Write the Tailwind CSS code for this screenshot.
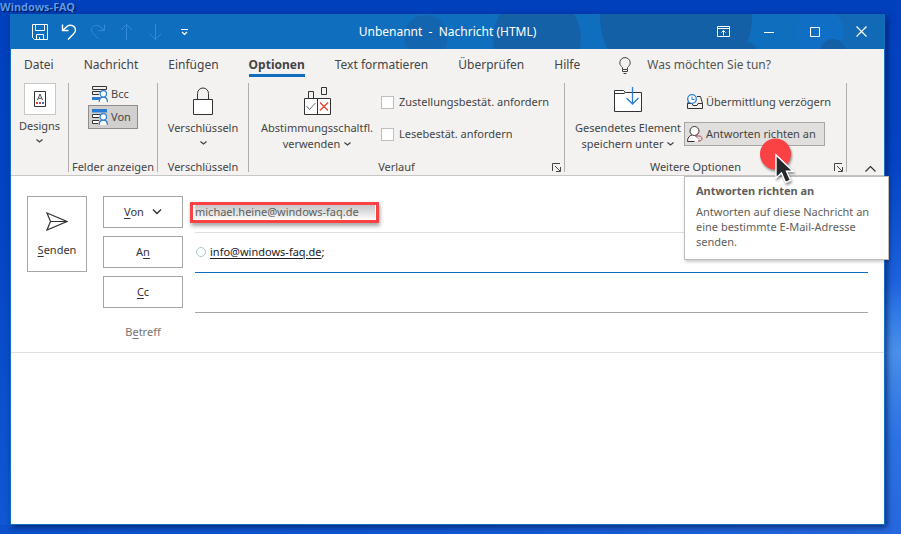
<!DOCTYPE html>
<html lang="de">
<head>
<meta charset="utf-8">
<meta name="viewport" content="width=device-width, initial-scale=1">
<title>Unbenannt - Nachricht (HTML)</title>
<script src="https://cdn.jsdelivr.net/npm/@tailwindcss/browser@4"></script>
</head>
<body class="relative flex min-h-screen flex-col bg-[linear-gradient(180deg,#0140bd_0%,#0443c2_40%,#0c50cc_75%,#1158d4_100%)] pt-[14px] pr-4 pb-[9px] pl-[10px] font-['Noto_Sans','Open_Sans',sans-serif] text-[11px] leading-4 text-[#444]">
  <!-- Desktop glow on the right and along the bottom -->
  <div aria-hidden="true" class="absolute inset-y-0 right-0 w-4 bg-[linear-gradient(180deg,#0140bd_0%,#0443c2_30%,#0c50cc_40%,#1f62dd_53%,#2f78e6_58%,#4a90ea_66%,#3c82e6_72%,#2c72e4_82%,#2668dd_100%)]"></div>
  <div aria-hidden="true" class="absolute inset-x-0 bottom-0 h-[9px] bg-[linear-gradient(90deg,#0c50cc_0%,#1158d4_50%,#2668dd_100%)]"></div>
  <p class="absolute top-0 left-0 leading-[14px] font-bold text-[#5a9bf0] [text-shadow:1px_1px_1px_#001040]">Windows-FAQ</p>

  <div class="relative flex flex-1 flex-col border border-t-0 border-[#1270c4] bg-white shadow-[2px_2px_6px_rgba(0,20,70,0.7)]">
    <header class="relative flex h-[35px] items-center bg-[#106ebe] text-white">
      <svg aria-hidden="true" class="absolute inset-y-0 right-0 h-[35px] w-[504px]" viewBox="0 0 504 35">
        <circle cx="46" cy="23" r="22" fill="#1465b0"/>
        <circle cx="157" cy="24" r="44" fill="#1461a8"/>
        <circle cx="296" cy="2" r="76" fill="#1460a6"/>
        <path d="M434 0h70v35h-70z" fill="#1269b6"/>
        <circle cx="440" cy="18" r="24" fill="#106ec4"/>
        <circle cx="365" cy="42" r="14" fill="#1460a6"/>
        <circle cx="453" cy="38" r="13" fill="#1460a6"/>
      </svg>
      <div class="relative flex-1">
        <nav class="flex items-center gap-[13px] pl-[21px]" aria-label="Schnellzugriff">
          <button aria-label="Speichern"><svg class="size-4" viewBox="0 0 16 16" fill="none" stroke="currentColor"><path d="M.5.5h15v15H2.500l-2-2zM3.500.5v6h9v-6M4.500 15.500v-5h7v5M7.500 13v2.500"/></svg></button>
          <button aria-label="Rückgängig"><svg class="size-4" viewBox="0 0 16 16" fill="none" stroke="currentColor" stroke-width="1.400"><path d="M1.500.5v6h6M1.500 6.500 6 2.500C9 0 14.500 1.500 14.500 6c0 2-1 3-2 4L7 15.500"/></svg></button>
          <button aria-label="Wiederholen" class="text-[#3389e0]"><svg class="size-4" viewBox="0 0 16 16" fill="none" stroke="currentColor"><path d="M14.500.5v6h-6M14.500 6.500 10 2.500C7 0 1.500 1.500 1.500 6c0 2 1 3 2 4L8.500 15"/></svg></button>
          <button aria-label="Vorheriges Element" class="text-[#3389e0]"><svg class="size-4" viewBox="0 0 16 16" fill="none" stroke="currentColor"><path d="M7.500 16V.5M2 6l5.500-5.500L13 6"/></svg></button>
          <button aria-label="Nächstes Element" class="text-[#3389e0]"><svg class="size-4" viewBox="0 0 16 16" fill="none" stroke="currentColor"><path d="M7.500 0v15.500M2 10l5.500 5.500L13 10"/></svg></button>
          <button aria-label="Symbolleiste anpassen"><svg class="size-4" viewBox="0 0 16 16" fill="none" stroke="currentColor" stroke-width="1.200"><path d="M4 5.500h7M5 8l2.500 2.500L10 8"/></svg></button>
        </nav>
      </div>
      <h1 class="relative text-xs whitespace-pre">Unbenannt  -  Nachricht (HTML)</h1>
      <div class="relative flex h-full flex-1 justify-end">
        <button aria-label="Menüband-Anzeigeoptionen" class="grid w-[46px] place-items-center"><svg class="h-[11px] w-[13px]" viewBox="0 0 13 11" fill="none" stroke="currentColor"><path d="M.5.5h12v10H.5zM.5 2.500h12M6.500 9.500v-5M4.500 6.500l2-2 2 2"/></svg></button>
        <button aria-label="Minimieren" class="grid w-[46px] place-items-center"><svg class="size-[10px]" viewBox="0 0 10 10" stroke="currentColor"><path d="M0 5.500h10"/></svg></button>
        <button aria-label="Maximieren" class="grid w-[46px] place-items-center"><svg class="size-[10px]" viewBox="0 0 10 10" fill="none" stroke="currentColor"><path d="M.5.5h9v9h-9z"/></svg></button>
        <button aria-label="Schließen" class="grid w-[46px] place-items-center"><svg class="size-[11px]" viewBox="0 0 11 11" stroke="currentColor" stroke-width="1.200"><path d="m.5.5 10 10m0-10-10 10"/></svg></button>
      </div>
    </header>

    <div class="border-b border-[#c8c6c4] bg-[#f3f2f1]">
      <nav aria-label="Menüband" class="flex h-[34px] items-start gap-[30px] pl-[13px] text-xs whitespace-nowrap">
        <a href="#" class="flex h-7 items-center pt-1">Datei</a>
        <a href="#" class="flex h-7 items-center pt-1">Nachricht</a>
        <a href="#" class="flex h-7 items-center pt-1">Einfügen</a>
        <a href="#" aria-current="page" class="flex h-7 items-center border-b-[3px] border-[#106ebe] pt-[7px] font-bold">Optionen</a>
        <a href="#" class="flex h-7 items-center pt-1">Text formatieren</a>
        <a href="#" class="flex h-7 items-center pt-1">Überprüfen</a>
        <a href="#" class="flex h-7 items-center pt-1">Hilfe</a>
        <button class="ml-[9px] flex h-7 items-center gap-4 pt-1 text-[#555]"><svg class="h-[17px] w-3" viewBox="0 0 12 17" fill="none" stroke="#444"><path d="M3.500 12.500v-2C2 9 .8 8 .8 5.800a5.200 5.200 0 0 1 10.400 0C11.200 8 10 9 8.500 10.500v2zM3.500 12.500v2h5v-2M4.500 16.500h3"/></svg>Was möchten Sie tun?</button>
      </nav>

      <div class="grid grid-cols-[58fr_89fr_91fr_316fr_282fr_37fr] pb-[3px] whitespace-nowrap">
        <section class="flex h-[89px] flex-col items-center border-r border-[#b1afad]">
          <button class="flex flex-col items-center">
            <span class="grid size-8 place-items-center border border-[#c8c6c4] bg-white"><svg class="h-4 w-3" viewBox="0 0 12 16" fill="none"><path d="M.5.5h11v15H.5z" stroke="#333"/><path d="M3.500 9 6 3l2.500 6M4.200 7.200h3.600" stroke="#555"/><path d="M2 11h2v2H2z" fill="#e83c3c"/><path d="M5 11h2v2H5z" fill="#e83c3c"/><path d="M8 11h2v2H8z" fill="#2b7cd3"/></svg></span>
            <span class="mt-[3px]">Designs</span>
            <svg class="mt-[5px] h-1 w-[7px]" viewBox="0 0 7 4" fill="none" stroke="#444" stroke-width="1.300"><path d="M.5.5l3 2.500 3-2.500"/></svg>
          </button>
        </section>

        <section class="flex h-[89px] flex-col items-center justify-between border-r border-[#b1afad]">
          <div class="flex flex-col">
            <button class="flex h-[22px] items-center gap-[3px] border border-transparent px-[3px]">
              <svg class="size-4" viewBox="0 0 16 16" fill="none"><path d="M.5.5h14v3H.5zM9 5.500H.5v3H7" stroke="#333"/><path d="M0 11h8v3H0z" fill="#2b7cd3"/><path d="M7.200 16c0-6.500 8.200-6.500 8.200 0" fill="#fff" stroke="#2b7cd3" stroke-width="1.200"/><circle cx="11.300" cy="7.800" r="3.200" fill="#fff" stroke="#2b7cd3" stroke-width="1.200"/></svg>Bcc</button>
            <button aria-pressed="true" class="flex h-6 items-center gap-[3px] border border-[#8f8d8b] bg-[#d2d0ce] pr-1.5 pl-[3px]">
              <svg class="size-4" viewBox="0 0 16 16" fill="none"><path d="M0 0h15v3.500H0z" fill="#2b7cd3"/><path d="M9 5.500H.5v3H7M7 11.500H.5v3H6" stroke="#333" fill="#fff"/><path d="M7.200 16c0-6.500 8.200-6.500 8.200 0" fill="#fff" stroke="#2b7cd3" stroke-width="1.200"/><circle cx="11.300" cy="7.800" r="3.200" fill="#fff" stroke="#2b7cd3" stroke-width="1.200"/></svg>Von</button>
          </div>
          <h2 class="leading-[10px]">Felder anzeigen</h2>
        </section>

        <section class="flex h-[89px] flex-col items-center justify-between border-r border-[#b1afad] pt-1">
          <button class="flex flex-col items-center">
            <svg class="h-[29px] w-5" viewBox="0 0 20 29" fill="none" stroke="#333"><path d="M4.500 12V6.500a5.500 5.500 0 0 1 11 0V12"/><path d="M.5 12.500h19v15H.5z" fill="#fff"/></svg>
            <span class="mt-1">Verschlüsseln</span>
            <svg class="mt-[5px] h-1 w-[7px]" viewBox="0 0 7 4" fill="none" stroke="#444" stroke-width="1.300"><path d="M.5.5l3 2.500 3-2.500"/></svg>
          </button>
          <h2 class="leading-[10px]">Verschlüsseln</h2>
        </section>

        <section class="flex h-[89px] flex-col justify-between border-r border-[#b1afad] pt-1">
          <div class="flex gap-1.5 pl-[10px]">
            <button class="flex w-[116px] flex-col items-center">
              <svg class="h-[29px] w-[27px]" viewBox="0 0 27 29" fill="none"><path d="M4.500 11V4.500h5V11M17.500.5h5v7h-5z" stroke="#333"/><path d="M.5 11.500h26v16H.5z" fill="#fff" stroke="#333"/><path d="M13.500 11.500v16" stroke="#333"/><path d="m2.500 19 3 3.500L11.500 16" stroke="#5b6b80"/><path d="m16 15.500 8 8m0-8-8 8" stroke="#e83c2c" stroke-width="1.200"/></svg>
              <span class="mt-1">Abstimmungsschaltfl.</span>
              <span class="flex items-center gap-1">verwenden <svg class="h-1 w-[7px]" viewBox="0 0 7 4" fill="none" stroke="#444" stroke-width="1.300"><path d="M.5.5l3 2.500 3-2.500"/></svg></span>
            </button>
            <div class="flex flex-col gap-4 pt-[7px]">
              <label class="flex items-center gap-[5px]"><input type="checkbox" class="size-[13px] appearance-none border border-[#c0bebc] bg-white">Zustellungsbestät. anfordern</label>
              <label class="flex items-center gap-[5px]"><input type="checkbox" class="size-[13px] appearance-none border border-[#c0bebc] bg-white">Lesebestät. anfordern</label>
            </div>
          </div>
          <div class="flex items-center pr-[3px]">
            <h2 class="flex-1 text-center leading-[10px]">Verlauf</h2>
            <button aria-label="Verlauf: weitere Einstellungen" class="pl-2"><svg class="size-[9px]" viewBox="0 0 9 9" fill="none" stroke="#444"><path d="M.5 8V.5H8M3 3l5 5M8.500 4v4.500H4"/></svg></button>
          </div>
        </section>

        <section class="flex h-[89px] flex-col justify-between border-r border-[#b1afad] pt-1">
          <div class="flex gap-[3px] pl-[10px]">
            <button class="flex w-[106px] flex-col items-center">
              <svg class="h-[29px] w-7" viewBox="0 0 28 29" fill="none"><path d="M.5 24.500V3.500h9l2 2h16v19z" fill="#fff" stroke="#333"/><path d="M.5 6.500H10l1.500-1" stroke="#333"/><path d="M18.500 0v17M12.500 11l6 6 6-6" stroke="#2b7cd3" stroke-width="1.300"/></svg>
              <span class="mt-1">Gesendetes Element</span>
              <span class="flex items-center gap-1">speichern unter <svg class="h-1 w-[7px]" viewBox="0 0 7 4" fill="none" stroke="#444" stroke-width="1.300"><path d="M.5.5l3 2.500 3-2.500"/></svg></span>
            </button>
            <div class="flex flex-col gap-2 pt-[3px]">
              <button class="flex h-6 items-center gap-[3px] border border-transparent px-0.5">
                <svg class="size-4" viewBox="0 0 16 16" fill="none"><path d="M10 2.500h3.500l2 7v5H.5v-5H5l1 2h4l1-2h4.500M1.500 7.500l-1 2" stroke="#333"/><circle cx="5" cy="5" r="4.300" fill="#fff" stroke="#2b7cd3" stroke-width="1.300"/><path d="M5 2.500V5.500h2.500" stroke="#2b7cd3"/></svg>Übermittlung verzögern</button>
              <div class="relative">
                <button aria-describedby="hint" class="flex h-6 w-[141px] items-center gap-[3px] border border-[#a8a6a4] bg-[#e1dfdd] px-0.5">
                  <svg class="size-4" viewBox="0 0 16 16" fill="none"><path d="M.5 15.500C.5 11.500 2.500 9.500 5 9h4l2 2v4.500z" fill="#fff"/><circle cx="7.500" cy="5" r="4.500" fill="#fff" stroke="#333"/><path d="M7.500 15.500h-7C.5 11.500 2.500 9.500 5 9" stroke="#333"/><path d="M11 7.500 8.500 10 11 12.500M8.500 10h3.500c4 0 4 5 0 5h-1" stroke="#a4485e"/></svg>Antworten richten an</button>
                <div id="hint" role="tooltip" class="absolute top-[54px] left-0 z-10 h-[84px] w-[205px] border border-[#bebbb8] bg-white px-[11px] pt-1.5 leading-[15px] whitespace-normal text-[#605e5c] shadow-[1px_2px_3px_rgba(0,0,0,0.2)]">
                  <p class="font-bold">Antworten richten an</p>
                  <p class="mt-1.5">Antworten auf diese Nachricht an eine bestimmte E-Mail-Adresse senden.</p>
                </div>
                <svg aria-hidden="true" class="absolute top-4 left-[76px] z-20 h-12 w-10 drop-shadow-[1px_2px_1px_rgba(0,0,0,0.4)]" viewBox="0 0 40 48"><circle cx="15.500" cy="16" r="15.500" fill="#fa4244"/><path d="M16 17v23l5.500-5 4 9.500 5-2.200-4-9h6.500z" fill="#26282c" stroke="#fff" stroke-width="1.400"/></svg>
              </div>
            </div>
          </div>
          <div class="flex items-center pr-[3px]">
            <h2 class="flex-1 text-center leading-[10px]">Weitere Optionen</h2>
            <button aria-label="Weitere Optionen: Einstellungen" class="pl-2"><svg class="size-[9px]" viewBox="0 0 9 9" fill="none" stroke="#444"><path d="M.5 8V.5H8M3 3l5 5M8.500 4v4.500H4"/></svg></button>
          </div>
        </section>

        <div class="flex items-end justify-end pr-2">
          <button aria-label="Menüband reduzieren"><svg class="h-1.5 w-[11px]" viewBox="0 0 11 6" fill="none" stroke="#333" stroke-width="1.200"><path d="m.5 5.500 5-5 5 5"/></svg></button>
        </div>
      </div>
    </div>

    <form class="flex gap-4 border-b border-[#e1dfdd] pt-[17px] pr-4 pl-4">
      <button type="button" class="mt-[3px] flex h-[76px] w-[60px] flex-col items-center border border-[#a6a6a6] pt-[15px] text-[#333]">
        <svg class="h-[19px] w-[22px]" viewBox="0 0 22 19" fill="none" stroke="#333" stroke-width="1.200"><path d="M1 1l20 8.500L1 18l3.500-8.500zM4.500 9.500H21"/></svg>
        <span class="mt-[11px]"><u class="underline-offset-2">S</u>enden</span>
      </button>
      <div class="flex-1">
        <div class="flex h-10 gap-3 pt-[3px]">
          <button type="button" class="flex h-8 w-20 items-center justify-center gap-2 border border-[#a6a6a6] text-[#333]"><span><u class="underline-offset-2">V</u>on</span><svg class="h-1.5 w-[10px]" viewBox="0 0 10 6" fill="none" stroke="#333" stroke-width="1.400"><path d="m1 .5 4 4 4-4"/></svg></button>
          <div class="relative flex h-[37px] flex-1 items-center border-b border-[#e1dfdd] pb-1">
            <input aria-label="Von" readonly value="michael.heine@windows-faq.de" class="h-4 w-[180px] bg-[linear-gradient(180deg,#c4c4c4_0%,#d8d8d8_40%,#ffffff_100%)] text-[#605e5c] outline-none">
            <div aria-hidden="true" class="absolute top-[6px] -left-[5px] h-[21px] w-[189px] border-[3px] border-[#fa4244] shadow-[1px_3px_4px_rgba(0,0,0,0.35)]"></div>
          </div>
        </div>
        <div class="flex h-10 gap-3 pt-[3px]">
          <button type="button" class="h-8 w-20 border border-[#a6a6a6] text-[#333]">A<u class="underline-offset-2">n</u></button>
          <div class="flex h-[37px] flex-1 items-center border-b border-[#106ebe] pb-1 text-[#222]">
            <span aria-hidden="true" class="mr-[4px] ml-px size-[10px] rounded-full border border-[#a9c8d8]"></span>
            <a href="mailto:info@windows-faq.de" class="underline underline-offset-2">info@windows-faq.de</a>;
            <input aria-label="An" class="h-4 min-w-0 flex-1 outline-none">
          </div>
        </div>
        <div class="flex h-10 gap-3 pt-[3px]">
          <button type="button" class="h-8 w-20 border border-[#a6a6a6] text-[#333]"><u class="underline-offset-2">C</u>c</button>
          <div class="flex h-[37px] flex-1 items-center border-b border-[#a6a6a6] pb-1"><input aria-label="Cc" class="h-4 min-w-0 flex-1 outline-none"></div>
        </div>
        <div class="flex h-[39px] items-center gap-3 pb-0.5">
          <label for="subject" class="w-20 text-center text-[#767472]">B<u class="underline-offset-2">e</u>treff</label>
          <input id="subject" class="h-6 min-w-0 flex-1 outline-none">
        </div>
      </div>
    </form>
    <textarea aria-label="Nachrichtentext" class="flex-1 resize-none px-4 py-2 outline-none"></textarea>
  </div>
</body>
</html>
